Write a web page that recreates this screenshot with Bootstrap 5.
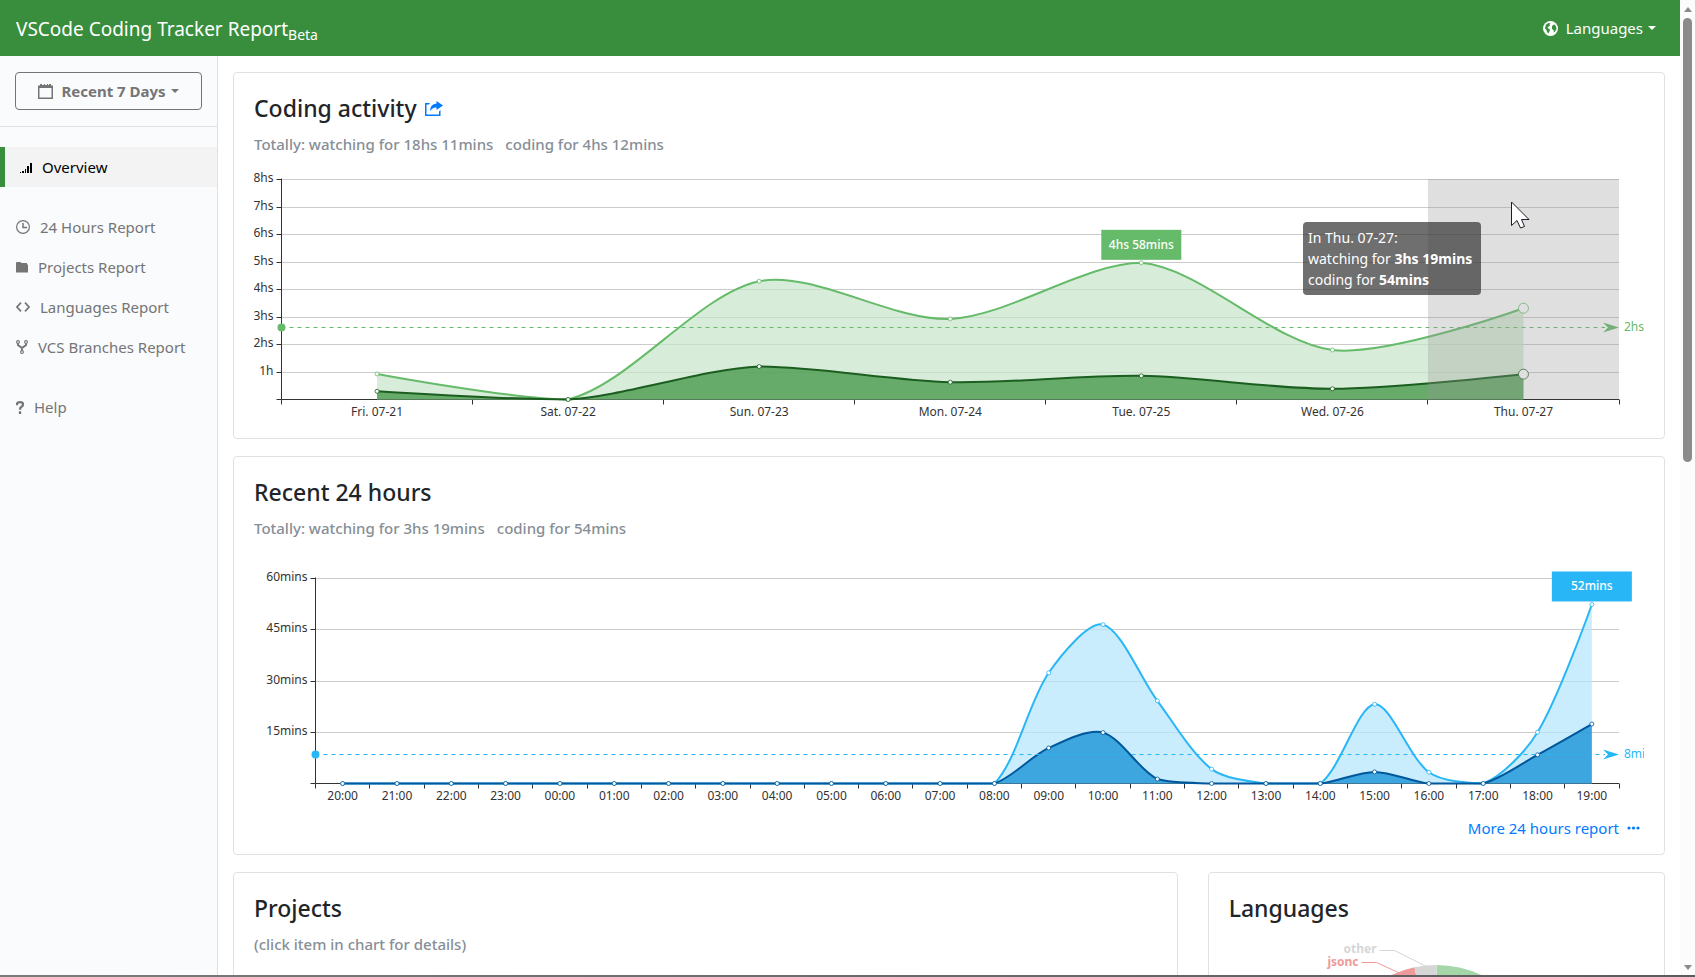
<!DOCTYPE html>
<html lang="en">
<head>
<meta charset="utf-8">
<meta name="viewport" content="width=device-width, initial-scale=1">
<title>VSCode Coding Tracker Report</title>
<link href="https://cdn.jsdelivr.net/npm/bootstrap@5.3.0/dist/css/bootstrap.min.css" rel="stylesheet">
<script src="https://cdn.jsdelivr.net/npm/bootstrap@5.3.0/dist/js/bootstrap.bundle.min.js"></script>
<style>
body{font-family:"Noto Sans","Open Sans",sans-serif;font-size:15px;line-height:24px;color:#212529}
a{text-decoration:none}
svg{display:block}
.topbar{background:#388e3c;height:56px;padding:0 24px 0 16px}
.brand-name{font-size:19px;line-height:30px;color:#fff;padding-top:2px}
.brand-name sub{font-size:14px}
.lang-btn{color:#fff;font-size:15px;line-height:24px;border:0}
.lang-btn svg{margin-right:8px}
.dropdown-toggle::after{margin-left:5px;vertical-align:3px;border-top-width:4px;border-left-width:4px;border-right-width:4px}
.sidebar{width:218px;background:#f9fbfd;border-right:1px solid #dee2e6}
.range-box{padding:16px 15px;border-bottom:1px solid #dee2e6}
.range-btn{height:38px;font-size:15px;font-weight:700;color:#757575;border:1px solid #757575;border-radius:4px;padding:0}
.range-btn svg{margin-right:8px}
.side-nav{padding-top:20px}
.side-nav .nav-link{height:40px;padding:0 0 0 16px;color:#757575}
.side-nav .nav-link.active{background:#f3f3f3;color:#000;border-left:5px solid #388e3c;padding-left:15px}
.side-nav .nav-link svg{margin-right:10px}
.side-nav .group-start{margin-top:20px}
.main-area{padding:16px 15px 0;min-width:0}
.panel{border:1px solid #dee2e6;border-radius:4px;padding:20px;margin-bottom:17px}
.panel-more{padding-bottom:14px}
.panel h4{font-size:23px;line-height:30px;font-weight:500;margin:0 0 9px}
.panel h6{font-size:15px;line-height:24px;font-weight:500;color:#868e96;margin:0}
.panel h6 span{margin-right:12px}
.panel a{color:#007bff}
.blocks{--bs-gutter-x:30px}
.chart{overflow:hidden}
.chart text{font-size:12px}
.chart-days{height:262px}
.chart-hours{height:276px}
.chart-langs{height:400px;margin-top:11px}
.chart-langs text{font-weight:700}
.tip{right:163px;top:66px;min-width:178px;padding:5px;border-radius:4px;background:rgba(50,50,50,.7);color:#fff;font-size:14px;line-height:21px;white-space:nowrap}
.pointer{right:114px;top:45px}
.scrollbar{width:15px;background:#fcfcfc}
.scrollbar i{display:block;width:9px;height:444px;border-radius:5px;background:#8b8b8b}
.arrow-up,.arrow-down{border:4px solid transparent}
.arrow-up{border-top:0;border-bottom:5px solid #8b8b8b;margin:7px 0 6px}
.arrow-down{border-bottom:0;border-top:5px solid #8b8b8b;margin:auto 0 5px}
.desk-edge{height:2px;background:linear-gradient(90deg,#7d7a7a,#5c5a5c)}
</style>
</head>
<body class="vh-100 overflow-hidden d-flex flex-column">
<div class="d-flex flex-grow-1 overflow-hidden">
  <div class="flex-grow-1 d-flex flex-column overflow-hidden">
    <header class="topbar d-flex align-items-center justify-content-between flex-shrink-0">
      <a class="brand-name" href="#">VSCode Coding Tracker Report<sub>Beta</sub></a>
      <button class="lang-btn btn p-0 d-flex align-items-center dropdown-toggle" type="button" data-bs-toggle="dropdown">
        <svg width="15" height="15" viewBox="0 0 15 15"><circle cx="7.500" cy="7.500" r="7.500" fill="#fff"/><path fill="#388e3c" d="M2.500 5 3.500 3 6 2 7.500 2.500 6.500 3.500 7 4.500 5 6 4.500 7 6.500 8 7 9.500 6 11 5.500 12.500 4 11 3.500 9 2 7.500ZM10 4 11.500 3.500 13 5.500 13.500 8 12 10.500 11 11.500 10.500 9 9 8 9 5.500Z"/></svg>Languages</button>
    </header>
    <div class="d-flex flex-grow-1 overflow-hidden">
      <aside class="sidebar flex-shrink-0">
        <div class="range-box">
          <button class="range-btn btn w-100 d-flex align-items-center justify-content-center dropdown-toggle" type="button" data-bs-toggle="dropdown">
            <svg width="15" height="15" viewBox="0 0 15 15" fill="#757575"><path fill-rule="evenodd" d="M0 1.500H2V0H4V1H6V0H7V1H9V0H10V1H11V0H13V1.500H15V15H0ZM1.500 4V13.500H13.500V4Z"/></svg>Recent 7 Days</button>
        </div>
        <nav class="side-nav nav flex-column">
          <a class="nav-link active d-flex align-items-center" href="#"><svg width="12" height="11" viewBox="0 0 12 11" fill="currentColor" shape-rendering="crispEdges"><path d="M0 10h1v1H0zM2 9h2v2H2zM5 7h1v4H5zM7 4h2v7H7zM10 1h2v10h-2z"/></svg>Overview</a>
          <a class="nav-link d-flex align-items-center group-start" href="#"><svg width="14" height="14" viewBox="0 0 14 14" fill="none" stroke="currentColor"><circle cx="7" cy="7" r="6.400" stroke-width="1.200"/><path stroke-width="1.500" d="M7 3v4.500h4"/></svg>24 Hours Report</a>
          <a class="nav-link d-flex align-items-center" href="#"><svg width="12" height="11" viewBox="0 0 12 11" fill="currentColor"><path d="M0 2.500V1Q0 0 1 0H4.500L5.500 1H11V2.500H12V10.500H0Z"/></svg>Projects Report</a>
          <a class="nav-link d-flex align-items-center" href="#"><svg width="14" height="10" viewBox="0 0 14 10" fill="none" stroke="currentColor" stroke-width="1.700"><path d="M5 .700 1 5l4 4.300M9 .700 13 5 9 9.300"/></svg>Languages Report</a>
          <a class="nav-link d-flex align-items-center" href="#"><svg width="12" height="14" viewBox="0 0 12 14" fill="none" stroke="currentColor"><g stroke-width="1.100"><circle cx="2" cy="2" r="1.400"/><circle cx="10" cy="2" r="1.400"/><circle cx="6" cy="12" r="1.400"/></g><path stroke-width="2" d="M2 3.500V5l4 3 4-3V3.500M6 7.500v3"/></svg>VCS Branches Report</a>
          <a class="nav-link d-flex align-items-center group-start" href="#"><svg width="8" height="13" viewBox="0 0 8 13" fill="none" stroke="currentColor" stroke-width="2.300"><path d="M1 4.200V3Q1 1.200 4 1.200T7 3.500Q7 5 5.500 5.800T4 8.800M4 10.300V13"/></svg>Help</a>
        </nav>
      </aside>
      <main class="main-area flex-grow-1 overflow-hidden">
        <section class="panel">
          <h4 class="d-flex align-items-center">Coding activity <a class="ms-2" href="#" aria-label="Share"><svg width="18" height="15" viewBox="0 0 18 15" fill="#007bff"><path d="M5 2H0V15H15.500V9L14 10.500V13.500H1.500V3.500H4ZM11.500 0 18 4.500 11.500 9V6.500Q7.500 6 5 10.500 5 3 11.500 2.500Z"/></svg></a></h4>
          <h6><span>Totally: watching for 18hs 11mins</span>coding for 4hs 12mins</h6>
          <div class="position-relative">
            <div class="chart chart-days" id="days"></div>
            <div class="tip position-absolute">In Thu. 07-27:<br>watching for <b>3hs 19mins</b><br>coding for <b>54mins</b></div>
            <svg class="pointer position-absolute" width="19" height="28" viewBox="0 0 19 28" fill="#fff" stroke="#1a1a2a"><path d="M.500 1V24.500L6 19.500 9.500 27 13.500 25.500 10.500 18.500H18Z"/></svg>
          </div>
        </section>
        <section class="panel panel-more">
          <h4>Recent 24 hours</h4>
          <h6><span>Totally: watching for 3hs 19mins</span>coding for 54mins</h6>
          <div class="chart chart-hours" id="hours"></div>
          <div class="d-flex justify-content-end pe-1"><a class="d-flex align-items-center gap-2" href="#">More 24 hours report <svg width="13" height="4" viewBox="0 0 13 4" fill="#007bff"><circle cx="2" cy="2" r="1.600"/><circle cx="6.500" cy="2" r="1.600"/><circle cx="11" cy="2" r="1.600"/></svg></a></div>
        </section>
        <div class="row blocks">
          <div class="col-8"><section class="panel"><h4>Projects</h4><h6>(click item in chart for details)</h6><div class="chart-langs"></div></section></div>
          <div class="col-4"><section class="panel"><h4>Languages</h4><div class="chart chart-langs" id="langs"></div></section></div>
        </div>
      </main>
    </div>
  </div>
  <div class="scrollbar d-flex flex-column align-items-center flex-shrink-0" aria-hidden="true"><div class="arrow-up"></div><i></i><div class="arrow-down"></div></div>
</div>
<div class="desk-edge flex-shrink-0"></div>
<script>
// Smooth line through the points; control points stay inside the series' bounds.
const SMOOTH = .3;
function smoothPath(pts) {
  const xs = pts.map(p => p[0]), ys = pts.map(p => p[1]);
  const lim = (v, a) => Math.max(Math.min(v, Math.max(...a)), Math.min(...a));
  const dist = (a, b) => Math.hypot(a[0] - b[0], a[1] - b[1]);
  let d = `M${pts[0]}`, cp0 = pts[0];
  for (let i = 1; i < pts.length; i++) {
    const p = pts[i], prev = pts[i - 1], next = pts[i + 1];
    let cp1 = p, out = p;
    if (next) {
      const r = dist(p, next) / (dist(p, next) + dist(p, prev));
      const v = [next[0] - prev[0], next[1] - prev[1]];
      const at = k => [lim(p[0] + v[0] * k, xs), lim(p[1] + v[1] * k, ys)];
      cp1 = at(-SMOOTH * (1 - r)); out = at(SMOOTH * r);
    }
    d += `C${cp0} ${cp1} ${p}`;
    cp0 = out;
  }
  return d;
}
function lineChart(id, o) {
  const box = document.getElementById(id), W = box.clientWidth, H = box.clientHeight;
  const L = o.left + .5, R = W - 25, T = o.top + .5, B = T + o.height;
  const y = v => B - v / o.max * o.height, step = (R - L) / o.labels.length;
  const snap = v => Math.floor(v) + .5;
  let s = '';
  o.ticks.forEach(([v, name]) => {
    const yy = snap(y(v));
    if (v) s += `<path d="M${L} ${yy}H${R}" stroke="#ccc"/>`;
    s += `<path d="M${L - 5} ${yy}H${L}" stroke="#333"/><text x="${L - 8}" y="${yy + 2}" text-anchor="end" fill="#333">${name}</text>`;
  });
  let axis = `<path d="M${L} ${T - 1}V${B}M${L} ${B}H${R}" stroke="#333"/>`;
  for (let i = 0; i <= o.labels.length; i++) axis += `<path d="M${snap(L + i * step)} ${B}v5" stroke="#333"/>`;
  o.labels.forEach((t, i) => axis += `<text x="${L + (i + .5) * step}" y="${B + 16}" text-anchor="middle" fill="#333">${t}</text>`);
  s += axis;
  const all = o.series.map(q => q.data.map((v, i) => [L + (i + .5) * step, y(v)]));
  o.series.forEach((q, k) => {
    const pts = all[k], d = smoothPath(pts), n = pts.length - 1;
    s += `<path d="${d}L${pts[n][0]} ${B}L${pts[0][0]} ${B}Z" fill="${q.fill}" fill-opacity=".7"/><path d="${d}" fill="none" stroke="${q.line}" stroke-width="2"/>`;
    pts.forEach((p, i) => s += `<circle cx="${p[0]}" cy="${p[1]}" r="${o.band && i === n ? 5 : 2}" fill="#fff" stroke="${q.line}" stroke-opacity=".8"/>`);
  });
  const c = o.series[0].line, a = snap(y(o.avg));
  s += `<path d="M${L + 8} ${a}H${R - 14}" stroke="${c}" stroke-dasharray="4 4"/><circle cx="${L}" cy="${a}" r="4" fill="${c}"/><path d="M${R - 16} ${a - 5}L${R} ${a}L${R - 16} ${a + 5}L${R - 11} ${a}Z" fill="${c}"/><text x="${R + 5}" y="${a + 3}" fill="${c}">${o.avgText}</text>`;
  const m = all[0][o.peak];
  s += `<rect x="${m[0] - 40}" y="${m[1] - 33}" width="80" height="30" fill="${c}"/><text x="${m[0]}" y="${m[1] - 14}" text-anchor="middle" fill="#fff" font-weight="500">${o.peakText}</text>`;
  if (o.band) s += `<rect x="${R - step}" y="${T - .5}" width="${step}" height="${o.height}" fill="rgba(150,150,150,.3)"/>`;
  box.innerHTML = `<svg width="${W}" height="${H}">${s}</svg>`;
}
function pieChart(id) {
  const box = document.getElementById(id), W = box.clientWidth, H = box.clientHeight;
  const cx = W / 2, r = 106, cy = 31 + r;
  const at = deg => [cx + r * Math.sin(deg * Math.PI / 180), cy - r * Math.cos(deg * Math.PI / 180)];
  const slice = (a, b, f) => `<path d="M${cx} ${cy}L${at(a)}A${r} ${r} 0 ${b - a > 180 ? 1 : 0} 1 ${at(b)}Z" fill="${f}"/>`;
  box.innerHTML = `<svg width="${W}" height="${H}">` + slice(0, 200, '#a5d6a7') + slice(200, 348, '#ef9a9a') + slice(348, 360, '#d6d6d6') +
    `<path d="M${cx - 11} 32L${cx - 42} 16.500H${cx - 57}" fill="none" stroke="#d6d6d6"/><path d="M${cx - 37} 39L${cx - 60} 28.500H${cx - 75}" fill="none" stroke="#ef9a9a"/>` +
    `<text x="${cx - 60}" y="19" text-anchor="end" fill="#d6d6d6">other</text><text x="${cx - 78}" y="32" text-anchor="end" fill="#ef9a9a">jsonc</text></svg>`;
}
function drawCharts() {
  lineChart('days', {
    left: 27, top: 23, height: 220, max: 8, band: true, avg: 2.63, avgText: '2hs', peak: 4, peakText: '4hs 58mins',
    ticks: [[8, '8hs'], [7, '7hs'], [6, '6hs'], [5, '5hs'], [4, '4hs'], [3, '3hs'], [2, '2hs'], [1, '1h'], [0, '']],
    labels: ['Fri. 07-21', 'Sat. 07-22', 'Sun. 07-23', 'Mon. 07-24', 'Tue. 07-25', 'Wed. 07-26', 'Thu. 07-27'],
    series: [{ data: [.93, 0, 4.3, 2.93, 4.97, 1.8, 3.32], line: '#66bb6a', fill: '#c8e6c9' },
             { data: [.3, 0, 1.2, .63, .86, .39, .92], line: '#1b5e20', fill: '#388e3c' }]
  });
  lineChart('hours', {
    left: 61, top: 38, height: 205, max: 60, avg: 8.5, avgText: '8mins', peak: 23, peakText: '52mins',
    ticks: [[60, '60mins'], [45, '45mins'], [30, '30mins'], [15, '15mins'], [0, '']],
    labels: Array.from({ length: 24 }, (_, i) => String((i + 20) % 24).padStart(2, '0') + ':00'),
    series: [{ data: [...Array(13).fill(0), 32.4, 46.5, 24.2, 4.2, 0, 0, 23.2, 3.3, 0, 15, 52.4], line: '#29b6f6', fill: '#b3e5fc' },
             { data: [...Array(13).fill(0), 10.4, 14.9, 1.3, 0, 0, 0, 3.4, 0, 0, 8.4, 17.4], line: '#01579b', fill: '#0288d1' }]
  });
  pieChart('langs');
}
drawCharts();
addEventListener('resize', drawCharts);
</script>
</body>
</html>
